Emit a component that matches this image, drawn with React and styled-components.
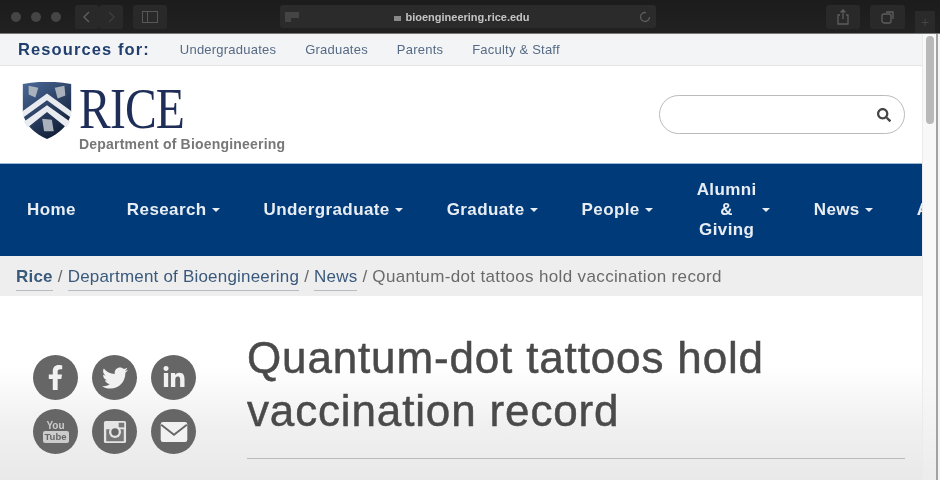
import React from 'react';
import styled, { createGlobalStyle } from 'styled-components';
import { FaFacebookF, FaTwitter, FaLinkedinIn, FaSearch } from 'react-icons/fa';

const Global = createGlobalStyle`
  html, body {
    margin: 0;
    padding: 0;
    width: 940px;
    height: 480px;
    overflow: hidden;
    background: #fff;
    font-family: "Liberation Sans", Arial, sans-serif;
  }
`;

const Frame = styled.div`
  width: 940px;
  height: 480px;
  overflow: hidden;
  display: flex;
  flex-direction: column;
  filter: blur(0.5px);
`;

const Chrome = styled.div`
  height: 34px;
  flex: none;
  background: linear-gradient(#1c1c1c, #212121);
  border-bottom: 1px solid #777;
  box-sizing: border-box;
  display: flex;
  align-items: center;
  padding: 0 5px 0 11px;
`;

const Dots = styled.div`
  display: flex;
  gap: 10px;
  margin-right: 14px;
`;

const Dot = styled.span`
  width: 10px;
  height: 10px;
  border-radius: 50%;
  background: #454545;
`;

const ChromeButton = styled.div`
  width: ${(p) => p.$w}px;
  height: 24px;
  margin-right: ${(p) => p.$mr || 0}px;
  background: #292929;
  border-radius: 3px;
  display: flex;
  align-items: center;
  justify-content: center;
  flex: none;
`;

const UrlBar = styled.div`
  width: 376px;
  height: 23px;
  margin-right: 170px;
  background: #2b2b2b;
  border-radius: 3px;
  display: flex;
  align-items: center;
  padding: 0 4px;
  box-sizing: border-box;
  flex: none;
`;

const UrlText = styled.div`
  flex: 1;
  display: flex;
  align-items: center;
  justify-content: center;
  gap: 4px;
  color: #c4c4c4;
  font-size: 11px;
  font-weight: 700;
  padding-right: 14px;
`;

const PlusTab = styled.div`
  width: 20px;
  height: 22px;
  align-self: flex-end;
  margin-left: 10px;
  background: #2a2a2a;
  color: #444;
  font-size: 14px;
  line-height: 22px;
  text-align: center;
`;

const Viewport = styled.div`
  flex: 1;
  display: flex;
  min-height: 0;
  background: #fff;
`;

const Page = styled.div`
  width: 922px;
  flex: none;
  display: flex;
  flex-direction: column;
  overflow: hidden;
`;

const ScrollTrack = styled.div`
  width: 14px;
  flex: none;
  background: linear-gradient(#f8f8f8 0, #f8f8f8 340px, #ececec 446px);
  border-left: 1px solid #ebebeb;
  box-sizing: border-box;
  padding: 2px 2px 0 3px;
`;

const ScrollThumb = styled.div`
  height: 88px;
  border-radius: 4px;
  background: #b9b9b9;
`;

const WindowEdge = styled.div`
  flex: 1;
  background: #f4f4f4;
  border-left: 2px solid #a2a2a2;
`;

const ResourceBar = styled.div`
  height: 32px;
  flex: none;
  background: #f3f4f5;
  border-bottom: 1px solid #e4e4e4;
  box-sizing: border-box;
  display: flex;
  align-items: center;
  padding: 0 18px;
`;

const ResourceTitle = styled.strong`
  color: #203f6e;
  font-size: 16.5px;
  letter-spacing: 1.1px;
  margin-right: 30px;
`;

const ResourceLink = styled.span`
  color: #566a85;
  font-size: 13px;
  letter-spacing: 0.22px;
  margin-right: 29px;
`;

const Masthead = styled.div`
  height: 97px;
  flex: none;
  box-sizing: border-box;
  display: flex;
  justify-content: space-between;
  padding: 16px 17px 0 21px;
`;

const Brand = styled.div`
  display: grid;
  grid-template-columns: 52px auto;
  grid-template-rows: 52px auto;
  column-gap: 6px;
  align-content: start;
`;

const Wordmark = styled.div`
  color: #1f2e58;
  font-family: "Liberation Serif", "Times New Roman", serif;
  font-size: 56px;
  line-height: 54px;
  letter-spacing: -1px;
  transform: scaleX(0.85);
  transform-origin: left;
`;

const Department = styled.div`
  grid-column: 1 / 3;
  margin-left: 58px;
  margin-top: 2px;
  color: #777;
  font-size: 14px;
  letter-spacing: 0.2px;
  font-weight: 700;
`;

const Search = styled.div`
  width: 246px;
  height: 39px;
  margin-top: 13px;
  box-sizing: border-box;
  border: 1px solid #bbb;
  border-radius: 20px;
  display: flex;
  align-items: center;
  justify-content: flex-end;
  padding-right: 13px;
  color: #444;
  font-size: 14px;
`;

const Nav = styled.nav`
  height: 93px;
  flex: none;
  background: #003a78;
  border-top: 1px solid #9bb8d6;
  box-sizing: border-box;
  display: flex;
  align-items: center;
  gap: 44px;
  padding-left: 27px;
  white-space: nowrap;
`;

const NavItem = styled.div`
  display: flex;
  align-items: center;
  gap: 5px;
  color: #e8edf3;
  font-size: 17px;
  font-weight: 700;
  letter-spacing: 0.4px;
  margin-right: ${(p) => p.$mr || 0}px;
  flex: none;
`;

const Stacked = styled.div`
  text-align: center;
  line-height: 20px;
`;

const Caret = styled.i`
  width: 0;
  height: 0;
  border-left: 4.5px solid transparent;
  border-right: 4.5px solid transparent;
  border-top: 4.5px solid #e8edf3;
`;

const Breadcrumb = styled.div`
  height: 40px;
  flex: none;
  background: #eeeeee;
  box-sizing: border-box;
  display: flex;
  align-items: center;
  gap: 5px;
  padding: 5px 0 0 16px;
  color: #6a6a6a;
  font-size: 17px;
  letter-spacing: 0.2px;
  white-space: nowrap;
`;

const Crumb = styled.span`
  color: #3a5a7c;
  font-weight: ${(p) => (p.$strong ? 700 : 400)};
  border-bottom: 1px solid #b4bcc4;
  padding-bottom: 3px;
`;

const CurrentCrumb = styled.span`
  letter-spacing: 0.35px;
  padding-bottom: 4px;
`;

const Separator = styled.span`
  padding-bottom: 4px;
`;

const Content = styled.div`
  flex: 1;
  display: flex;
  padding: 35px 17px 0 33px;
  background: linear-gradient(#fff 0, #fff 70px, #f0f0f0 130px, #e9e9e9 184px);
`;

const Social = styled.div`
  width: 214px;
  flex: none;
  display: grid;
  grid-template-columns: repeat(3, 45px);
  grid-auto-rows: 45px;
  column-gap: 14px;
  row-gap: 9px;
  align-content: start;
  padding-top: 24px;
  box-sizing: border-box;
`;

const Circle = styled.div`
  width: 45px;
  height: 45px;
  border-radius: 50%;
  background: #666;
  color: #f1f1f1;
  display: flex;
  flex-direction: column;
  align-items: center;
  justify-content: center;
  font-size: ${(p) => p.$size || 24}px;
`;

const TubeTop = styled.span`
  font-size: 10px;
  font-weight: 700;
  line-height: 11px;
  color: #ccc;
`;

const TubeBox = styled.span`
  font-size: 9.5px;
  font-weight: 700;
  line-height: 12px;
  padding: 0 2px;
  border-radius: 2px;
  background: #ccc;
  color: #666;
`;

const Article = styled.div`
  flex: 1;
  min-width: 0;
`;

const Title = styled.h1`
  margin: 0;
  padding-bottom: 21px;
  border-bottom: 1px solid #bbb;
  color: #4a4a4a;
  font-size: 44px;
  line-height: 53px;
  font-weight: 400;
  -webkit-text-stroke: 0.5px #4a4a4a;
  letter-spacing: 0.85px;
`;

const Crest = () => (
  <svg width="52" height="58" viewBox="0 0 52 60">
    <defs>
      <linearGradient id="crest" x1="0" y1="0" x2="0.6" y2="1">
        <stop offset="0" stopColor="#4a6a98" />
        <stop offset="1" stopColor="#131f38" />
      </linearGradient>
    </defs>
    <path d="M1 2 C18 -1 34 -1 51 2 L51 30 C50 44 38 54 26 59 C14 54 2 44 1 30 Z" fill="url(#crest)" />
    <path d="M1 30 L26 12 L51 30 V37 L26 19 L1 37 Z" fill="#e8ecf1" />
    <path d="M2 41 L26 24 L50 41 L46 47 L26 31 L6 47 Z" fill="#e8ecf1" />
    <path d="M7 4 l10 2 l-3 10 l-7 -3 Z M34 6 l10 -2 l1 10 l-8 3 Z M21 38 l10 1 l2 12 l-10 0 Z" fill="#a9b1bc" />
  </svg>
);

const Instagram = () => (
  <svg width="24" height="24" viewBox="0 0 26 26">
    <rect x="1" y="1" width="24" height="24" rx="2" fill="#e4e4e4" />
    <rect x="3.5" y="10" width="19" height="13" fill="#777" />
    <rect x="17" y="3" width="6" height="5" fill="#777" />
    <circle cx="13" cy="13" r="6.5" fill="#e4e4e4" />
    <circle cx="13" cy="13" r="4" fill="#666" />
  </svg>
);

const Envelope = () => (
  <svg width="28" height="22" viewBox="0 0 30 24">
    <rect x="0.5" y="1" width="29" height="22" rx="2.5" fill="#f1f1f1" />
    <path d="M1 4 L15 15 L29 4" fill="none" stroke="#666" strokeWidth="2" />
  </svg>
);

const Chevron = ({ d, color }) => (
  <svg width="12" height="14" viewBox="0 0 12 14">
    <path d={d} fill="none" stroke={color} strokeWidth="1.5" />
  </svg>
);

const resources = ['Undergraduates', 'Graduates', 'Parents', 'Faculty & Staff'];

export default function App() {
  return (
    <>
      <Global />
      <Frame>
        <Chrome>
          <Dots>
            <Dot />
            <Dot />
            <Dot />
          </Dots>
          <ChromeButton $w={24}>
            <Chevron d="M8 2 L3 7 L8 12" color="#5c5c5c" />
          </ChromeButton>
          <ChromeButton $w={24} $mr={10}>
            <Chevron d="M4 2 L9 7 L4 12" color="#3c3c3c" />
          </ChromeButton>
          <ChromeButton $w={34} $mr={113}>
            <svg width="16" height="12" viewBox="0 0 16 12">
              <rect x="0.5" y="0.5" width="15" height="11" fill="none" stroke="#575757" />
              <path d="M5.5 0 V12" stroke="#575757" />
            </svg>
          </ChromeButton>
          <UrlBar>
            <svg width="16" height="12" viewBox="0 0 16 12">
              <path d="M1 1 H15 V7 H7 V11 H1 Z" fill="#444" />
            </svg>
            <UrlText>
              <svg width="7" height="8" viewBox="0 0 7 8">
                <rect y="3" width="7" height="5" fill="#888" />
              </svg>
              bioengineering.rice.edu
            </UrlText>
            <svg width="14" height="14" viewBox="0 0 14 14">
              <path d="M11.5 7 A4.5 4.5 0 1 1 8 2.6" fill="none" stroke="#5d5d5d" strokeWidth="1.3" />
            </svg>
          </UrlBar>
          <ChromeButton $w={34} $mr={10}>
            <svg width="14" height="16" viewBox="0 0 14 16">
              <path d="M4 6 H2 V15 H12 V6 H10 M7 10 V1 M4.5 3.5 L7 1 L9.5 3.5" fill="none" stroke="#5e5e5e" strokeWidth="1.3" />
            </svg>
          </ChromeButton>
          <ChromeButton $w={35}>
            <svg width="14" height="14" viewBox="0 0 14 14">
              <rect x="1" y="4" width="9" height="9" rx="2" fill="none" stroke="#5e5e5e" strokeWidth="1.3" />
              <path d="M5 2 H12 V9" fill="none" stroke="#5e5e5e" strokeWidth="1.3" />
            </svg>
          </ChromeButton>
          <PlusTab>+</PlusTab>
        </Chrome>
        <Viewport>
          <Page>
            <ResourceBar>
              <ResourceTitle>Resources for:</ResourceTitle>
              {resources.map((r) => (
                <ResourceLink key={r}>{r}</ResourceLink>
              ))}
            </ResourceBar>
            <Masthead>
              <Brand>
                <Crest />
                <Wordmark>RICE</Wordmark>
                <Department>Department of Bioengineering</Department>
              </Brand>
              <Search>
                <FaSearch />
              </Search>
            </Masthead>
            <Nav>
              <NavItem $mr={7}>Home</NavItem>
              <NavItem>
                Research
                <Caret />
              </NavItem>
              <NavItem>
                Undergraduate
                <Caret />
              </NavItem>
              <NavItem>
                Graduate
                <Caret />
              </NavItem>
              <NavItem>
                People
                <Caret />
              </NavItem>
              <NavItem>
                <Stacked>
                  Alumni
                  <br />&amp;
                  <br />
                  Giving
                </Stacked>
                <Caret />
              </NavItem>
              <NavItem>
                News
                <Caret />
              </NavItem>
              <NavItem>About</NavItem>
            </Nav>
            <Breadcrumb>
              <Crumb $strong>Rice</Crumb>
              <Separator>/</Separator>
              <Crumb>Department of Bioengineering</Crumb>
              <Separator>/</Separator>
              <Crumb>News</Crumb>
              <Separator>/</Separator>
              <CurrentCrumb>Quantum-dot tattoos hold vaccination record</CurrentCrumb>
            </Breadcrumb>
            <Content>
              <Social>
                <Circle $size={25}>
                  <FaFacebookF />
                </Circle>
                <Circle $size={26}>
                  <FaTwitter />
                </Circle>
                <Circle $size={24}>
                  <FaLinkedinIn />
                </Circle>
                <Circle>
                  <TubeTop>You</TubeTop>
                  <TubeBox>Tube</TubeBox>
                </Circle>
                <Circle>
                  <Instagram />
                </Circle>
                <Circle>
                  <Envelope />
                </Circle>
              </Social>
              <Article>
                <Title>Quantum-dot tattoos hold vaccination record</Title>
              </Article>
            </Content>
          </Page>
          <ScrollTrack>
            <ScrollThumb />
          </ScrollTrack>
          <WindowEdge />
        </Viewport>
      </Frame>
    </>
  );
}
